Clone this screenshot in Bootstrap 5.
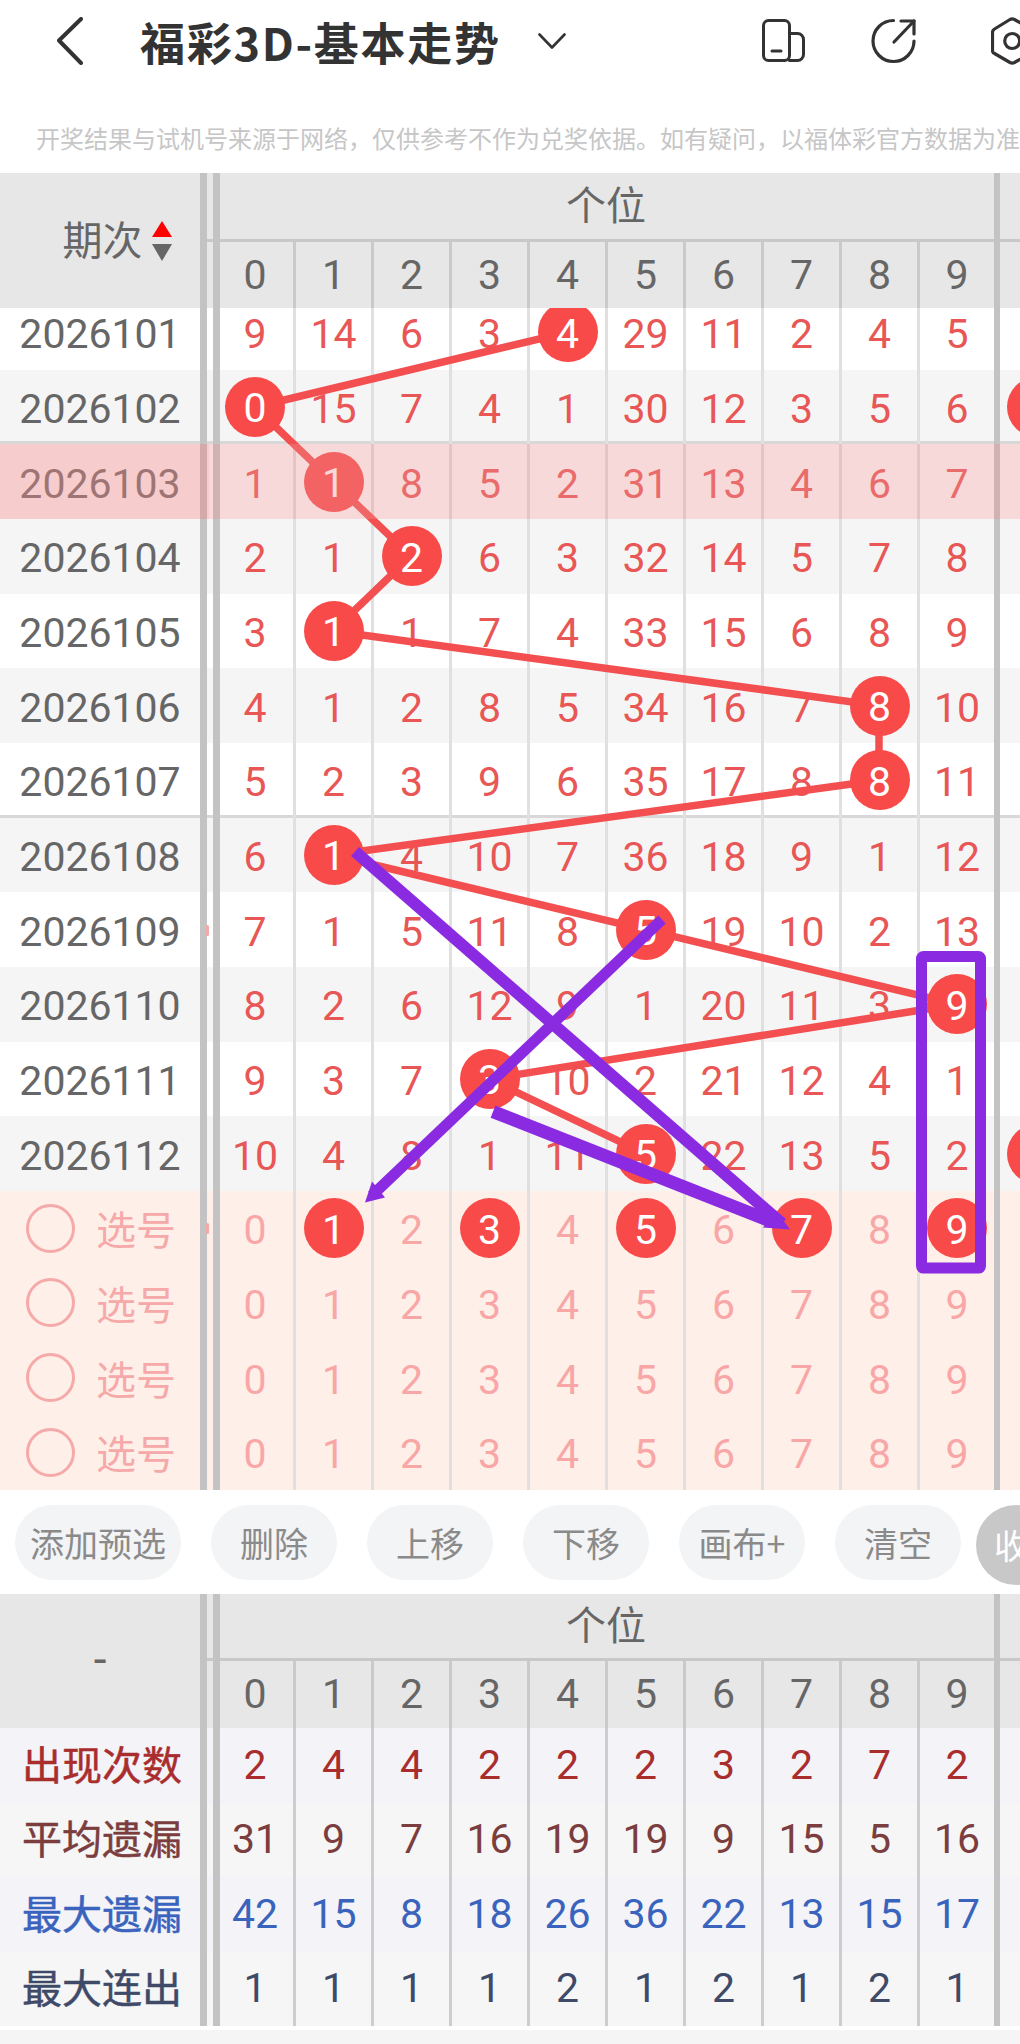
<!DOCTYPE html>
<html lang="zh-CN">
<head>
<meta charset="utf-8">
<title>福彩3D-基本走势</title>
<link rel="stylesheet" href="https://cdn.jsdelivr.net/npm/bootstrap@5.3.0/dist/css/bootstrap.min.css">
<style>
html,body{margin:0;background:#fff;}
body{width:1020px;height:2044px;overflow:hidden;font-family:Roboto,"Noto Sans CJK SC",sans-serif;color:#333;}
.topbar{height:82px;}
.back-ic{margin-left:57px;flex:none;}
.title-txt{margin-left:57px;font-size:45px;font-weight:700;color:#333;line-height:1;white-space:nowrap;letter-spacing:1.7px;font-family:"Noto Sans CJK SC",sans-serif;}
.caret-ic{margin-left:37px;flex:none;}
.ic-a{margin-left:196px;flex:none;}
.ic-b{margin-left:63px;flex:none;}
.ic-c{margin-left:74px;flex:none;}
.notice{height:91px;padding:21px 0 0 36px;font-size:24px;line-height:70px;color:#c6c6c6;white-space:nowrap;font-family:"Noto Sans CJK SC",sans-serif;}
.tgrid{display:grid;grid-template-columns:200px 7px 6px 7px 73px repeat(8,78px) 77px 6px 20px;width:1020px;}
.thead-a{grid-template-rows:66px 3px 66px;background:#e7e7e7;color:#666;}
.thead-b{grid-template-rows:64px 3px 67px;background:#e7e7e7;color:#666;}
.lefthead{grid-column:1;grid-row:1/-1;}
.bar{background:#c3c3c3;grid-row:1/-1;position:relative;z-index:1;}
.bar1{grid-column:2;}.bar2{grid-column:4;}.bar3{grid-column:15;}
.hline{grid-column:3/-1;grid-row:2;background:#c8c8c8;}
.pos{grid-column:5/15;grid-row:1;font-size:40px;font-family:"Noto Sans CJK SC",sans-serif;line-height:1;padding:0 2px 7px 0;}
.hd{grid-row:3;font-size:41px;line-height:1;border-left:3px solid #cacaca;}
.hd.first{border-left:0;padding-right:3px;}
.qi-wrap{padding-left:34px;}
.qi{font-size:40px;line-height:1;margin-bottom:5px;font-family:"Noto Sans CJK SC",sans-serif;}
.arrows{margin-left:9px;flex:none;}
.dash{font-size:46px;line-height:1;padding-bottom:5px;}
.bodyclip{height:1182px;overflow:hidden;}
.bodyinner{margin-top:-13px;position:relative;z-index:0;}
.datarow{height:74.67px;background:#fff;position:relative;}
.datarow.alt{background:#f5f5f5;}
.datarow.sepline{box-shadow:inset 0 -3px 0 #d8d8d8;}
.datarow.pre{background:#ffefe9;}
.datarow.pick::after{content:"";position:absolute;inset:0;background:rgba(235,146,146,.35);z-index:4;}
.datarow.pick::before{content:"";position:absolute;left:0;top:0;bottom:0;width:209px;background:rgba(230,100,100,.13);z-index:4;}
.barb{background:#c3c3c3;}
.gapcell{position:relative;}
.sliver{position:absolute;left:-1px;top:50%;width:3px;height:11px;margin-top:-5px;background:#f4a9a9;border-radius:2px;}
.issue{font-size:41px;color:#666;line-height:1;padding-top:5px;}
.num{font-size:41px;line-height:1;color:#e85656;border-left:3px solid #e0e0e0;padding-top:5px;}
.num.first{border-left:0;padding-right:3px;}
.pre .num{color:#f9a6a6;}
.hit{width:60px;height:60px;flex:none;border-radius:50%;background:#f94a4a;color:#fff;position:relative;z-index:2;margin-top:-5px;padding-top:4px;}
.outhit{margin-left:7px;margin-top:0;}
.ring{width:49px;height:49px;border:3px solid #f6a9a9;border-radius:50%;flex:none;margin-left:26px;}
.pick-txt{margin-left:21px;font-size:40px;line-height:1;color:#f6a9a9;font-family:"Noto Sans CJK SC",sans-serif;white-space:nowrap;}
.overlay{position:absolute;left:0;top:0;width:1020px;height:1195px;pointer-events:none;}
.ov-red{z-index:1;}
.ov-purple{z-index:5;}
.toolbar{height:104px;padding:15px 0 0 15px;gap:30px;overflow:hidden;}
.tool-btn{width:126px;height:75px;flex:none;background:#f3f4f6;border:0;border-radius:37.5px;color:#8a8a8a;font-size:34px;line-height:1;padding:0;font-family:"Noto Sans CJK SC",sans-serif;white-space:nowrap;}
.tool-btn.wide{width:166px;}
.tool-more{width:80px;height:80px;flex:none;margin-left:-15px;background:#c8c8c8;border:0;border-radius:50%;color:#fff;font-size:34px;line-height:1;padding:0 0 0 18px;text-align:left;font-family:"Noto Sans CJK SC",sans-serif;white-space:nowrap;}
.statrow{height:74.5px;background:#f6f6f6;}
.statrow.tint{background:#f3f3f8;}
.statname{font-size:40px;line-height:1;font-family:"Noto Sans CJK SC",sans-serif;white-space:nowrap;font-weight:400;-webkit-text-stroke:.5px currentColor;padding:0 0 5px 4px;}
.stat{font-size:41px;line-height:1;border-left:3px solid #cdcdcd;}
.stat.first{border-left:0;padding-right:3px;}
.tone-a{color:#a92d2d;}.tone-b{color:#7b3d3d;}.tone-c{color:#3a63bd;}.tone-d{color:#3e4a68;}
.footband{height:14px;margin-top:4px;background:#f5f5f5;}
</style>
</head>
<body>
<div class="topbar d-flex align-items-center overflow-hidden">
  <svg class="back-ic" width="26" height="48" viewBox="0 0 26 48"><path d="M24 2 2 23.500 24 46" fill="none" stroke="#333" stroke-width="4" stroke-linecap="round" stroke-linejoin="round"/></svg>
  <span class="title-txt">福彩3D-基本走势</span>
  <svg class="caret-ic" width="28" height="16" viewBox="0 0 28 16"><path d="M1.500 1.500 14 14.500 26.500 1.500" fill="none" stroke="#333" stroke-width="2.600" stroke-linecap="round" stroke-linejoin="round"/></svg>
  <svg class="ic-a" width="46" height="44" viewBox="0 0 46 44"><g fill="none" stroke="#333" stroke-width="3" stroke-linecap="round" stroke-linejoin="round"><rect x="1.500" y="1.500" width="26" height="40" rx="5"/><path d="M27.500 14.500h8a6 6 0 0 1 6 6v15a6 6 0 0 1-6 6h-8"/><path d="M10 32h9"/></g></svg>
  <svg class="ic-b" width="46" height="46" viewBox="0 0 46 46"><g fill="none" stroke="#333" stroke-width="3.200" stroke-linecap="round" stroke-linejoin="round"><path d="M22.500 2.500A20.500 20.500 0 1 0 43 23"/><path d="M23 24 43 3"/><path d="M30 3h13v13"/></g></svg>
  <svg class="ic-c" width="44" height="48" viewBox="0 0 44 48"><g fill="none" stroke="#333" stroke-width="3.200" stroke-linejoin="round"><path d="M19 2.500c1.500-.8 3-.8 4.500 0l15.500 9c1.500.9 2 2 2 3.500v18c0 1.500-.5 2.600-2 3.500l-15.500 9c-1.500.8-3 .8-4.500 0l-15.500-9C2 36.100 1.500 35 1.500 33.500v-18c0-1.500.5-2.600 2-3.500z"/><circle cx="21.200" cy="24" r="7.500"/></g></svg>
</div>
<div class="notice overflow-hidden">开奖结果与试机号来源于网络，仅供参考不作为兑奖依据。如有疑问，以福体彩官方数据为准</div>

<div class="tgrid thead-a" id="headA">
  <div class="lefthead d-flex align-items-center justify-content-center">
    <div class="d-flex align-items-center qi-wrap"><span class="qi">期次</span>
      <svg class="arrows" width="20" height="40" viewBox="0 0 20 40"><path d="M10 0 20 16H0z" fill="#f00"/><path d="M0 23h20L10 40z" fill="#666"/></svg>
    </div>
  </div>
  <div class="bar bar1"></div><div class="bar bar2"></div><div class="bar bar3"></div>
  <div class="hline"></div>
  <div class="pos d-flex align-items-center justify-content-center">个位</div>
</div>

<div class="bodyclip">
  <div class="bodyinner" id="bodyInner">
    <svg class="overlay ov-red" viewBox="0 295.4 1020 1195"><polyline fill="none" stroke="#f34f50" stroke-width="7.500" stroke-linejoin="round" points="567,332.7 255,407.400 333,482 411,556.700 333,631.400 879,706 879,780.700 333,855.400 645,930 957,1004.700 489,1079.400 645,1154"/></svg>
    <svg class="overlay ov-purple" viewBox="0 295.4 1020 1195">
      <g fill="none" stroke="#8a2be2">
        <rect x="921.500" y="957" width="59" height="311.500" rx="2" stroke-width="11"/>
        <path d="M355 852 782 1224" stroke-width="12"/>
        <path d="M662 920 372 1196" stroke-width="11"/>
        <path d="M493 1112 772 1222" stroke-width="13"/>
      </g>
      <path d="M790 1230 763 1228 776 1211z" fill="#8a2be2"/>
      <path d="M365 1203 385 1198 372 1182z" fill="#8a2be2"/>
    </svg>
  </div>
</div>

<div class="toolbar d-flex align-items-start">
  <button type="button" class="btn tool-btn wide">添加预选</button>
  <button type="button" class="btn tool-btn">删除</button>
  <button type="button" class="btn tool-btn">上移</button>
  <button type="button" class="btn tool-btn">下移</button>
  <button type="button" class="btn tool-btn">画布+</button>
  <button type="button" class="btn tool-btn">清空</button>
  <button type="button" class="btn tool-more">收</button>
</div>

<div class="tgrid thead-b" id="headB">
  <div class="lefthead d-flex align-items-center justify-content-center dash">-</div>
  <div class="bar bar1"></div><div class="bar bar2"></div><div class="bar bar3"></div>
  <div class="hline"></div>
  <div class="pos d-flex align-items-center justify-content-center">个位</div>
</div>
<div id="statArea"></div>
<div class="footband"></div>

<script>
function el(tag, cls, txt){var e=document.createElement(tag);e.className=cls;if(txt!==undefined)e.textContent=txt;return e;}
var center=' d-flex align-items-center justify-content-center';
function addHeadDigits(id){
  var h=document.getElementById(id);
  for(var i=0;i<10;i++){
    var d=el('div','hd'+center+(i==0?' first':''),String(i));
    d.style.gridColumn=String(5+i);
    h.appendChild(d);
  }
}
addHeadDigits('headA');addHeadDigits('headB');

var rows=[
 ['2026101',[9,14,6,3,4,29,11,2,4,5],4],
 ['2026102',[0,15,7,4,1,30,12,3,5,6],0],
 ['2026103',[1,1,8,5,2,31,13,4,6,7],1],
 ['2026104',[2,1,2,6,3,32,14,5,7,8],2],
 ['2026105',[3,1,1,7,4,33,15,6,8,9],1],
 ['2026106',[4,1,2,8,5,34,16,7,8,10],8],
 ['2026107',[5,2,3,9,6,35,17,8,8,11],8],
 ['2026108',[6,1,4,10,7,36,18,9,1,12],1],
 ['2026109',[7,1,5,11,8,5,19,10,2,13],5],
 ['2026110',[8,2,6,12,9,1,20,11,3,9],9],
 ['2026111',[9,3,7,3,10,2,21,12,4,1],3],
 ['2026112',[10,4,8,1,11,5,22,13,5,2],5]
];
var inner=document.getElementById('bodyInner');
var anchor=inner.firstChild;
function addRow(r,idx){
  var isPre=idx>=12;
  var cls='tgrid datarow';
  if(idx%2==1&&!isPre)cls+=' alt';
  if(idx==1||idx==6)cls+=' sepline';
  if(idx==2)cls+=' pick';
  if(isPre)cls+=' pre';
  var row=el('div',cls);
  if(!isPre){
    row.appendChild(el('div','issue'+center,r[0]));
  }else{
    var l=el('div','d-flex align-items-center');
    l.appendChild(el('span','ring'));
    l.appendChild(el('span','pick-txt','选号'));
    row.appendChild(l);
  }
  row.appendChild(el('div','barb'));
  var gap=el('div','gapcell');
  if(idx==8||idx==12)gap.appendChild(el('span','sliver'));
  row.appendChild(gap);
  row.appendChild(el('div','barb'));
  for(var i=0;i<10;i++){
    var c=el('div','num'+center+(i==0?' first':''));
    var hit=isPre?(idx==12&&i%2==1):(i==r[2]);
    if(hit)c.appendChild(el('span','hit'+center,String(i)));
    else c.textContent=String(isPre?i:r[1][i]);
    row.appendChild(c);
  }
  row.appendChild(el('div','barb'));
  var ex=el('div','d-flex align-items-center');
  if(idx==1||idx==11)ex.appendChild(el('span','hit outhit'));
  row.appendChild(ex);
  inner.insertBefore(row,anchor);
}
rows.forEach(addRow);
for(var p=0;p<4;p++)addRow(null,12+p);

var stats=[
 ['出现次数','tone-a',[2,4,4,2,2,2,3,2,7,2]],
 ['平均遗漏','tone-b',[31,9,7,16,19,19,9,15,5,16]],
 ['最大遗漏','tone-c',[42,15,8,18,26,36,22,13,15,17]],
 ['最大连出','tone-d',[1,1,1,1,2,1,2,1,2,1]]
];
var area=document.getElementById('statArea');
stats.forEach(function(s,k){
  var row=el('div','tgrid statrow'+(k%2==0?' tint':''));
  row.appendChild(el('div','statname '+s[1]+center,s[0]));
  row.appendChild(el('div','barb'));row.appendChild(el('div',''));row.appendChild(el('div','barb'));
  s[2].forEach(function(v,i){row.appendChild(el('div','stat '+s[1]+center+(i==0?' first':''),String(v)));});
  row.appendChild(el('div','barb'));row.appendChild(el('div',''));
  area.appendChild(row);
});
</script>
<script src="https://cdn.jsdelivr.net/npm/bootstrap@5.3.0/dist/js/bootstrap.bundle.min.js"></script>
</body>
</html>
